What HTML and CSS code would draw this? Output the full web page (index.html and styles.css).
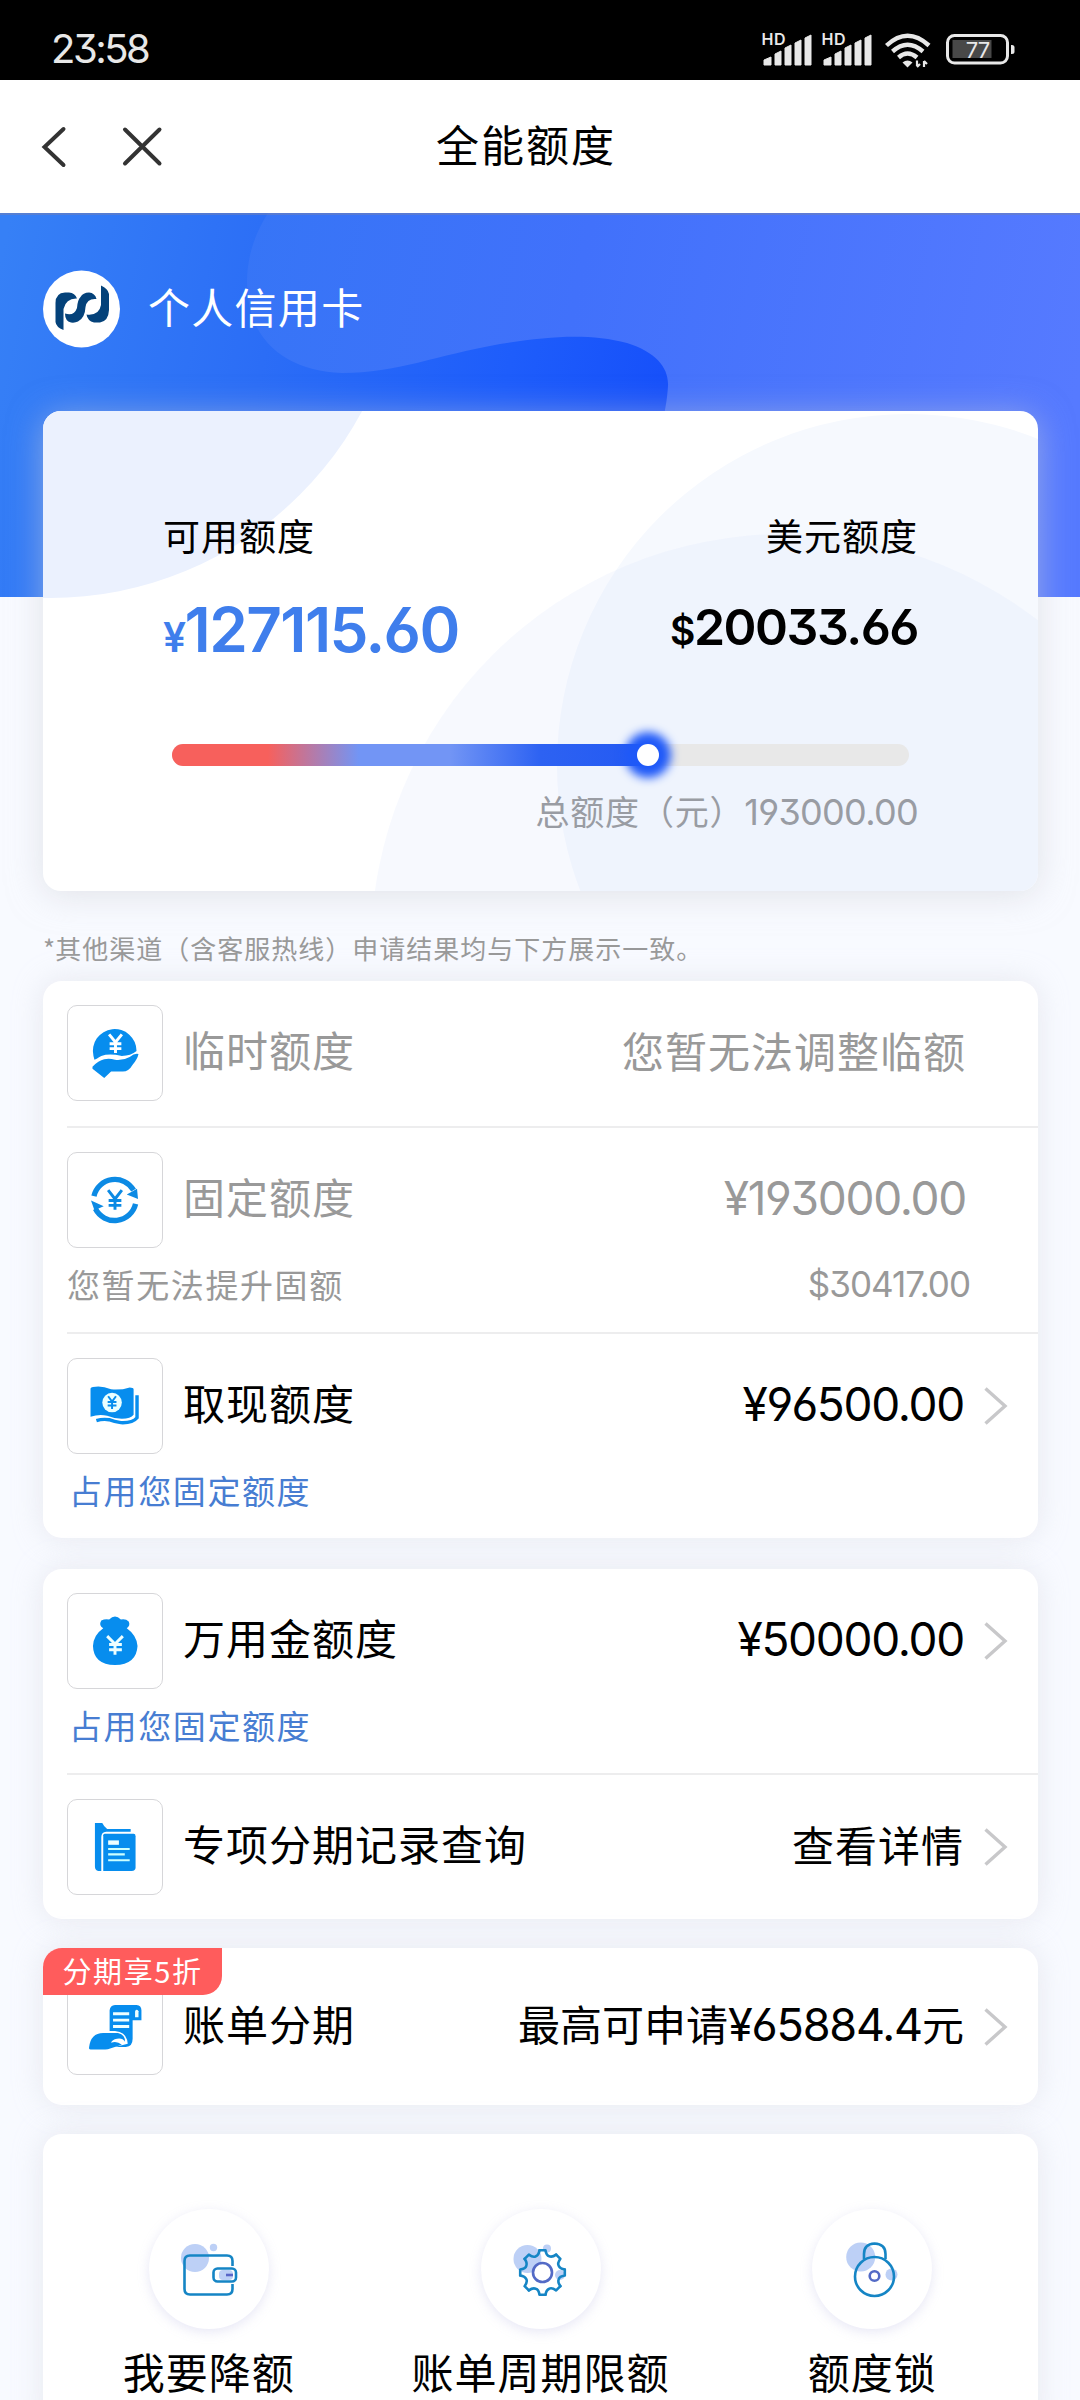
FILE: index.html
```html
<!DOCTYPE html>
<html lang="zh-CN">
<head>
<meta charset="utf-8">
<title>全能额度</title>
<link rel="stylesheet" href="styles.css">
</head>
<body>
<div class="statusbar">
  <span class="clock">23:58</span>
  <svg class="status-icons" width="256" height="44" viewBox="760 28 256 44">
    <g fill="#e8e8e8">
      <g id="signal">
        <text class="hd" x="761.5" y="45" textLength="24">HD</text>
        <path d="M764 65v-5l7-3v8zM775 65V54l6-3v14zM785 65V48l6-3v20zM795 65V43l6-3v25zM805 65V38l6-3v30z" stroke="#e8e8e8" stroke-linejoin="round"/>
      </g>
      <use href="#signal" x="60"/>
      <path d="M907.500 67.500l-5-5q5-4 10 0z"/>
      <path d="M917 66v-5.500M920 64l-3 3M924 61v6M924 61l3 3" stroke="#e8e8e8" stroke-width="2.200" fill="none"/>
    </g>
    <g fill="none" stroke="#e8e8e8" stroke-width="4.400">
      <path d="M886.500 45.500q21-19.500 42.500 0"/>
      <path d="M892.500 51.500q15-13.500 30.500 0"/>
      <path d="M898.500 57.500q9-8 18.500 0"/>
    </g>
    <rect x="952.500" y="40" width="39" height="18" fill="#484848"/>
    <rect x="947.500" y="35.500" width="60" height="27.500" rx="7" fill="none" stroke="#e8e8e8" stroke-width="3"/>
    <path d="M1011 45h1q2.500 0 2.500 2.500v4q0 2.500-2.500 2.500h-1z" fill="#e8e8e8"/>
    <text class="batt" x="977.500" y="57.500" text-anchor="middle">77</text>
  </svg>
</div>
<header class="navbar">
  <svg class="nav-icons" width="130" height="60" viewBox="36 116 130 60" fill="none" stroke="#333" stroke-width="4" stroke-linecap="round">
    <path d="M63.500 128L44.500 146L63.500 164" stroke-linejoin="miter"/>
    <path d="M125 128.500l34.500 34M159.500 128.500l-34.500 34"/>
  </svg>
  <h1 class="title">全能额度</h1>
</header>

<section class="hero">
  <svg class="hero-bg" width="1080" height="384" viewBox="0 213 1080 384">
    <defs>
      <linearGradient id="base" gradientUnits="userSpaceOnUse" x1="0" y1="260" x2="680" y2="400">
        <stop offset="0" stop-color="#3680f6"/><stop offset=".4" stop-color="#2b6df6"/><stop offset=".75" stop-color="#1e5dfb"/><stop offset="1" stop-color="#164ffa"/>
      </linearGradient>
      <linearGradient id="wave" gradientUnits="userSpaceOnUse" x1="245" y1="213" x2="1080" y2="380">
        <stop offset="0" stop-color="#3675f6"/><stop offset=".4" stop-color="#4171fb"/><stop offset="1" stop-color="#567aff"/>
      </linearGradient>
    </defs>
    <rect y="213" width="1080" height="384" fill="url(#base)"/>
    <path d="M268 213C247 246 242 282 252 316C264 352 299 372 342 373C397 373 437 355 500 344C548 336 590 333 627 343C656 352 669 368 668 386C667 402 664 420 655 450V597H1080V213Z" fill="url(#wave)"/>
    <rect y="213" width="1080" height="2" fill="#6d7fbd" opacity=".6"/>
  </svg>
  <div class="account">
    <svg width="78" height="78" viewBox="0 0 78 78">
      <ellipse cx="38.500" cy="39" rx="38.500" ry="38.500" fill="#fff"/>
      <g fill="#04427a">
        <path d="M12.500 33Q12.500 23 22 22.500H26Q32 23 34 28.500Q23 28 20.500 39V60Q13 57 12.500 52Z"/>
        <path d="M22 43.500Q31 46.500 34 38Q34.500 30 37.500 27Q40 22.500 46 22.500Q52 23 53.500 29Q44 28 42.500 37Q42 48 35 51.500Q32 53 28 52.500Q22 51 22 43.500Z"/>
        <path d="M58 15.500Q65 18.500 66 24V40Q65.500 51 57 52.500H51Q44.500 51 43.500 44.500Q56 46 58 35Z"/>
      </g>
    </svg>
    <span class="account-name">个人信用卡</span>
  </div>
  <div class="limit-card">
    <svg class="limit-bg" width="995" height="480" viewBox="43 411 995 480">
      <circle cx="50" cy="244" r="354" fill="#ebf1fe"/>
      <circle cx="908" cy="765" r="351" fill="#f6f9fe"/>
      <circle cx="785" cy="948" r="414" fill="#d8e2fb" opacity=".2"/>
    </svg>
    <div class="limits">
      <div class="limit">
        <div class="limit-label">可用额度</div>
        <div class="amount amount-cny"><span class="cur">¥</span>127115.60</div>
      </div>
      <div class="limit limit-right">
        <div class="limit-label">美元额度</div>
        <div class="amount amount-usd"><span class="cur">$</span>20033.66</div>
      </div>
    </div>
    <div class="track"><div class="fill"></div><div class="knob"></div></div>
    <div class="total">总额度（元）<span class="num">193000.00</span></div>
  </div>
</section>

<p class="note"><span class="star">*</span>其他渠道（含客服热线）申请结果均与下方展示一致。</p>

<section class="card card-limits">
  <div class="row row-temp muted">
    <div class="main">
      <span class="icon"><svg viewBox="0 0 96 96" fill="#078dee">
        <path d="M26 51A22.300 22.300 0 1 1 70 46Q64 51 55 51Q42 48 34 51Q29 54 27 55Z"/>
        <path d="M25 62Q31 56 37 54.500Q42 53 48 55Q56 56 63 52Q68 48 72 49Q71 54 66 60Q62 67 56 67H44L37 73.500L25 64Z"/>
        <path d="M42 29l6.500 8 6.500-8M48.500 37v11M42.500 38.500h12M42.500 43.500h12" stroke="#fff" stroke-width="3" fill="none"/>
      </svg></span>
      <span class="name">临时额度</span><span class="value">您暂无法调整临额</span>
    </div>
  </div>
  <div class="row row-fixed muted">
    <div class="main">
      <span class="icon"><svg viewBox="0 0 96 96" fill="none" stroke="#0c8ae4">
        <path d="M26.500 44A22 22 0 0 1 67 38" stroke-width="5.500"/>
        <path d="M69 52A22 22 0 0 1 28 57" stroke-width="5.500"/>
        <path d="M70.500 36.500L71.500 47L60 42.500ZM23.500 48.500l13 6-9.500 4Z" fill="#0c8ae4" stroke="none"/>
        <path d="M41 38l7 9 7-9M48 47v11M41.500 48.500h13M41.500 53.500h13" stroke-width="3"/>
      </svg></span>
      <span class="name">固定额度</span><span class="value num">¥193000.00</span>
    </div>
    <div class="sub"><span>您暂无法提升固额</span><span class="num sub-usd">$30417.00</span></div>
  </div>
  <div class="row row-cash">
    <div class="main">
      <span class="icon"><svg viewBox="0 0 96 96" fill="#078dee">
        <path d="M23 30Q24 28 31 28Q37 28 44 31Q54 32 63 29Q67 29 67 31V57Q64 61 55 61Q47 61 40 58Q32 56 23 59Z"/>
        <path d="M70.500 37V60Q66 65.500 54 65Q47 64 42 62Q35 61 29 63" fill="none" stroke="#078dee" stroke-width="3.500"/>
        <circle cx="45" cy="44.500" r="10" fill="#eaffff"/>
        <path d="M41 38l4 5.500 4-5.500M45 43v8M40.500 44h9M40.500 47.500h9" stroke="#078dee" stroke-width="2" fill="none"/>
      </svg></span>
      <span class="name">取现额度</span><span class="value num">¥96500.00</span>
      <svg class="chev" width="26" height="40" viewBox="0 0 26 40"><path d="M2.500 2.500L22 20L2.500 37.500"/></svg>
    </div>
    <div class="sub sub-link"><span>占用您固定额度</span></div>
  </div>
</section>

<section class="card card-special">
  <div class="row row-wan">
    <div class="main">
      <span class="icon"><svg viewBox="0 0 96 96" fill="#078dee">
        <path d="M36 35Q31 32 34 27Q38 25 42 26Q48 20 54 26Q59 25 62 28Q64 32 60 35Q70 42 71 53Q70 72 48 72.500Q26 72 25.500 53Q26 42 36 35Z"/>
        <path d="M40 43l8 8 8-8M48 51v11M42 51.500h13M42 57h13" stroke="#eff" stroke-width="3" fill="none"/>
      </svg></span>
      <span class="name">万用金额度</span><span class="value num">¥50000.00</span>
      <svg class="chev" width="26" height="40" viewBox="0 0 26 40"><path d="M2.500 2.500L22 20L2.500 37.500"/></svg>
    </div>
    <div class="sub sub-link"><span>占用您固定额度</span></div>
  </div>
  <div class="row row-records">
    <div class="main">
      <span class="icon"><svg viewBox="0 0 96 96" fill="#078dee">
        <path d="M27.500 23.500H35Q36.500 27 40 29.500H64V32.500H39Q34 33 34 38V72.500H31Q27.500 72 27.500 68Z"/>
        <path d="M36 36Q36 34.500 38 34.500H67Q69 34.500 69 37V69Q69 72.500 65 72.500H36Z"/>
        <path d="M41 43.500h11" stroke="#eff" stroke-width="4.500"/>
        <path d="M41 50h22M41 55.500h17M41 61.500h22" stroke="#cff" stroke-width="2.200"/>
      </svg></span>
      <span class="name">专项分期记录查询</span><span class="value">查看详情</span>
      <svg class="chev" width="26" height="40" viewBox="0 0 26 40"><path d="M2.500 2.500L22 20L2.500 37.500"/></svg>
    </div>
  </div>
</section>

<section class="card card-bill">
  <span class="badge">分期享5折</span>
  <div class="row row-bill">
    <div class="main">
      <span class="icon"><svg viewBox="0 0 96 96" fill="#078dee">
        <path d="M42.500 52V31Q43 26 48 25.500H70Q75 26 75 31V41H66V60Q66 68 59 68.500H48L61 65Q60 53 48 52Z"/>
        <path d="M68.500 38V32Q70 29 72 32V38Z" fill="#eff"/>
        <path d="M46 34.500h16.500M46 41h16.500M46 47.500h16.500" stroke="#eff" stroke-width="3"/>
        <path d="M21.500 69Q23 54 36 54H51Q59 56 58 63Q56 59 50 60Q45 61 44 64Q50 62 55 66L43 70Q41 71 38 71H23Q21 71 21.500 69Z"/>
      </svg></span>
      <span class="name">账单分期</span><span class="value mixed">最高可申请<span class="num">¥65884.4</span>元</span>
      <svg class="chev" width="26" height="40" viewBox="0 0 26 40"><path d="M2.500 2.500L22 20L2.500 37.500"/></svg>
    </div>
  </div>
</section>

<section class="card card-tools">
  <div class="tool">
    <span class="tool-icon"><svg viewBox="0 0 120 120" fill="none" stroke="#1585c5" stroke-width="2.600">
      <g fill="#bdd0f6" stroke="none"><circle cx="46" cy="49" r="14"/><circle cx="64.500" cy="38.500" r="3.700"/><rect x="70" y="61" width="14" height="10" rx="4"/></g>
      <path d="M83.500 57V52Q83.500 46.500 78 46.500H41Q35.500 46.500 35.500 52V80Q35.500 85.500 41 85.500H78Q83.500 85.500 83.500 80V75"/>
      <rect x="64.500" y="59.500" width="22.500" height="13" rx="4"/><path d="M77 66h7" stroke="#5965c8"/>
    </svg></span>
    <span>我要降额</span>
  </div>
  <div class="tool">
    <span class="tool-icon"><svg viewBox="0 0 120 120" fill="none" stroke="#1585c5" stroke-width="2.600" stroke-linecap="round" stroke-linejoin="round">
      <g fill="#bdd0f6" stroke="none"><circle cx="46.500" cy="50" r="14"/><circle cx="66" cy="39.500" r="4"/><circle cx="79" cy="66" r="5"/></g>
      <g transform="translate(61.500 63.500)">
        <path id="tooth" d="M-3 -22.300H3Q3.800 -17 6.700 -16.200Q9.800 -15 13.650 -17.890"/>
        <use href="#tooth" transform="rotate(45)"/><use href="#tooth" transform="rotate(90)"/><use href="#tooth" transform="rotate(135)"/><use href="#tooth" transform="rotate(180)"/><use href="#tooth" transform="rotate(225)"/><use href="#tooth" transform="rotate(270)"/><use href="#tooth" transform="rotate(315)"/>
        <circle r="9.500" stroke="#536ac6" fill="#fff"/>
      </g>
    </svg></span>
    <span>账单周期限额</span>
  </div>
  <div class="tool">
    <span class="tool-icon"><svg viewBox="0 0 120 120" fill="none" stroke="#1585c5" stroke-width="2.600">
      <g fill="#bdd0f6" stroke="none"><circle cx="48.700" cy="48" r="14.500"/><circle cx="79.500" cy="65.500" r="6"/></g>
      <circle cx="62.500" cy="67.500" r="19.500"/><path d="M52 50V45Q52 35 62.500 34.500Q73.500 35 73.500 45V50"/>
      <circle cx="62.500" cy="67" r="4.800" stroke="#536ac6"/>
    </svg></span>
    <span>额度锁</span>
  </div>
</section>
</body>
</html>
```
FILE: styles.css
```css
* { box-sizing: border-box; }
body {
  margin: 0;
  width: 1080px;
  height: 2400px;
  overflow: hidden;
  background: #f8faff;
  color: #000;
  font-family: "Noto Sans CJK SC", sans-serif;
  font-size: 42px;
  line-height: 60px;
  letter-spacing: 1px;
}
svg { display: block; flex: none; }
.num, .clock, .amount, .hd, .batt {
  font-family: Inter, "Noto Sans CJK SC", sans-serif;
  font-feature-settings: "cv03", "cv04", "cv09";
}

.statusbar {
  height: 80px;
  padding: 0 64px 0 51px;
  display: flex;
  justify-content: space-between;
  background: #000;
}
.clock { padding-top: 19px; font-size: 40px; letter-spacing: -2.500px; color: #e8e8e8; }
.status-icons { margin-top: 28px; }
.hd { font-size: 16px; font-weight: 600; letter-spacing: 0; }
.batt { font-size: 22px; letter-spacing: -1px; fill: #e8e8e8; }

.navbar {
  height: 133px;
  display: grid;
  grid-template-columns: 200px 1fr 200px;
  align-items: center;
  background: #fff;
}
.nav-icons { margin-left: 36px; }
.title { margin: -7px 0 0; padding-right: 28px; text-align: center; font-size: 43px; font-weight: 400; letter-spacing: 2px; }

.hero { position: relative; height: 678px; padding: 57px 42px 0 43px; }
.hero-bg { position: absolute; left: 0; top: 0; }
.account { position: relative; display: flex; align-items: center; gap: 27px; height: 78px; color: #fff; }
.account-name { margin-top: -7px; font-size: 42px; letter-spacing: 1.300px; }
.limit-card {
  position: relative;
  height: 480px;
  margin-top: 63px;
  padding: 96px 120px 0;
  border-radius: 18px;
  background: #fff;
  box-shadow: 0 4px 34px rgba(205, 208, 213, .55);
}
.limit-bg { position: absolute; left: 0; top: 0; border-radius: 18px; }
.limits { position: relative; display: flex; justify-content: space-between; height: 237px; }
.limit-right { text-align: right; }
.limit-label { height: 56px; line-height: 56px; font-size: 37px; }
.amount { height: 80px; line-height: 80px; margin-top: 27px; }
.amount-cny { color: #3f7eec; font-weight: 600; font-size: 62px; letter-spacing: -1.600px; }
.amount-cny .cur { font-size: 41px; }
.amount-usd { margin-top: 24px; font-weight: 600; font-size: 50px; letter-spacing: -1.500px; }
.amount-usd .cur { font-size: 39px; }
.track { position: relative; height: 22px; margin: 0 9px 0 8.500px; border-radius: 11px; background: #e8e8e8; }
.fill {
  width: 65%;
  height: 22px;
  border-radius: 11px 0 0 11px;
  background: linear-gradient(90deg, #f7605c 20%, #7295f5 39%, #7295f5 58%, #2d62f2 77%, #2359f3);
}
.knob {
  position: absolute;
  left: 465.500px;
  top: 0;
  width: 22px;
  height: 22px;
  border-radius: 50%;
  background: #fff;
  box-shadow: 0 0 10px 12px #1f59f8;
}
.total { position: relative; margin-top: 17px; text-align: right; font-size: 34px; line-height: 56px; letter-spacing: .8px; color: #999ca3; }
.total .num { font-size: 36px; letter-spacing: -.7px; }

.note { margin: 33px 0 0 43px; height: 48px; line-height: 48px; font-size: 26px; letter-spacing: 1px; color: #999; }
.star { letter-spacing: 0; }

.card {
  position: relative;
  width: 995px;
  margin: 0 0 29px 43px;
  border-radius: 19px;
  background: #fff;
  box-shadow: 0 0 30px rgba(205, 208, 215, .4);
}
.card-limits { height: 557px; margin-top: 9px; margin-bottom: 31px; }
.row { margin-left: 24px; padding-top: 24px; border-top: 2px solid #ededee; }
.row:first-of-type { border-top: 0; }
.row-temp { height: 145px; }
.row-fixed { height: 206px; }
.row-wan { height: 204px; }
.main { display: flex; align-items: center; height: 96px; padding-right: 29px; }
.icon { width: 96px; height: 96px; margin-right: 20px; border: 1px solid #d6d6d9; border-radius: 10px; flex: none; }
.icon svg { width: 94px; height: 94px; }
.name { flex: 1; margin-top: -8px; white-space: nowrap; }
.value { margin: -7px 19px 0 0; white-space: nowrap; }
.value.num { margin-top: -5px; font-size: 46px; letter-spacing: -1.300px; }
.mixed { letter-spacing: 0; }
.mixed .num { font-size: 45px; letter-spacing: -1.200px; }
.chev { fill: none; stroke: #c8c8ca; stroke-width: 3.400; }
.main > .value:last-child { margin-right: 43px; }
.muted { color: #999; }
.sub { display: flex; justify-content: space-between; padding: 12px 68px 0 0; font-size: 33px; line-height: 48px; letter-spacing: 1.600px; }
.sub-usd { font-size: 35px; letter-spacing: -1px; }
.sub-link { padding-left: 2px; color: #477dd2; }

.card-special { height: 350px; }
.card-bill { height: 157px; }
.row-bill { padding-top: 31px; }
.card-bill .row { border-top: 0; }
.badge {
  position: absolute;
  left: 0;
  top: 0;
  width: 179px;
  height: 47px;
  border-radius: 19px 0 19px 0;
  background: #ff5c5c;
  color: #fff;
  text-align: center;
  font-size: 29px;
  line-height: 44px;
  letter-spacing: 1.600px;
  z-index: 1;
}

.card-tools { height: 300px; display: flex; justify-content: space-between; padding-top: 75px; }
.tool { width: 332px; display: flex; flex-direction: column; align-items: center; gap: 12px; }
.tool-icon { width: 120px; height: 120px; border-radius: 50%; box-shadow: 0 3px 12px rgba(170, 170, 220, .28); }
```
